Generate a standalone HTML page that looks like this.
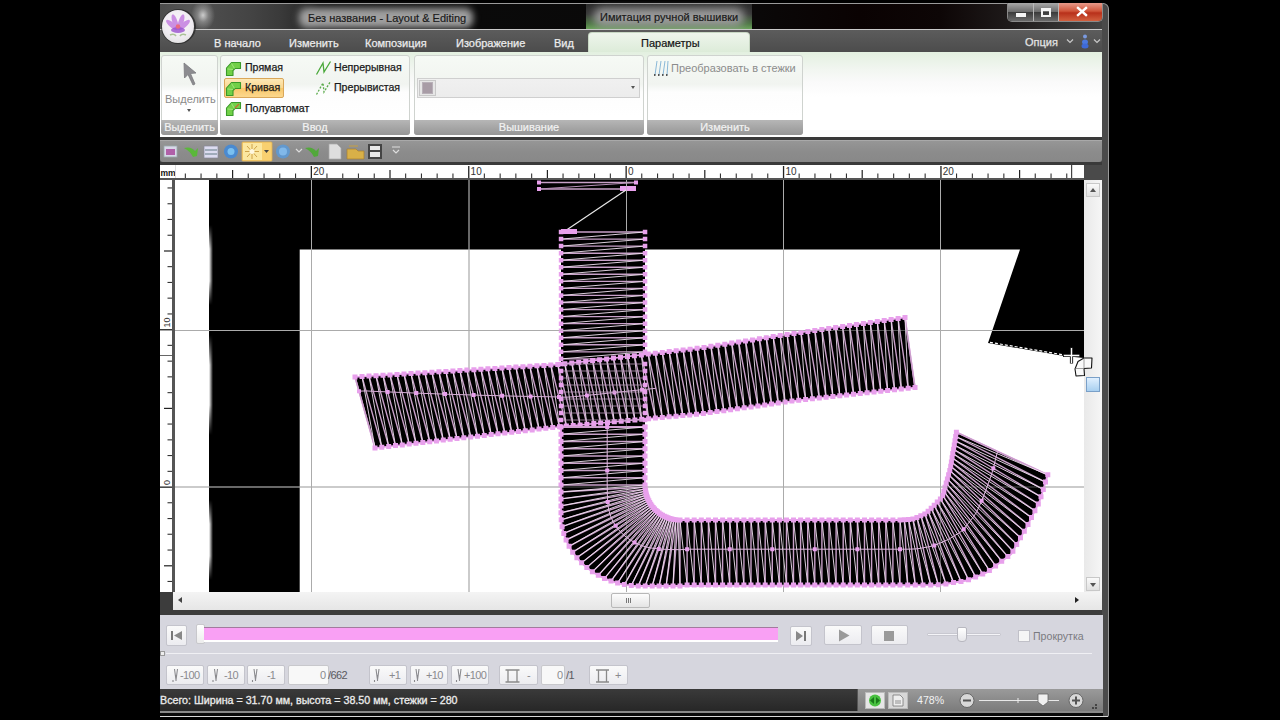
<!DOCTYPE html>
<html><head><meta charset="utf-8">
<style>
*{margin:0;padding:0;box-sizing:border-box}
html,body{width:1280px;height:720px;overflow:hidden;background:#000;font-family:"Liberation Sans",sans-serif;font-size:11px}
.a{position:absolute}
.t{position:absolute;white-space:nowrap;line-height:1}
#frame{left:160px;top:3px;width:949px;height:714px;background:#4a4a4a;border:1px solid #9a9a9a;border-left:none;border-radius:0 6px 2px 0}
#title{left:160px;top:4px;width:942px;height:25px;background:linear-gradient(90deg,#4c4c4c 0,#555 30px,#4a4a4a 60px,#444 90px,#3a3a3a 120px,#2e2e2e 140px,#161616 160px,#0a0a0a 300px,#0a0808 600px,#0a0202 700px,#0d0606 780px,#1e1a1a 850px,#3a3a3a 920px,#444 942px)}
#tline{left:160px;top:29px;width:942px;height:1px;background:#c9c9c9}
#tabs{left:160px;top:30px;width:942px;height:22px;background:linear-gradient(#5c5c5c,#4c4c4c)}
#ribbon{left:160px;top:52px;width:942px;height:86px;background:linear-gradient(#e3f0e0 0,#f2f6f1 18px,#fafafa 30px,#fff 45px,#fff)}
.grp{position:absolute;top:3px;height:80px;border:1px solid #cfd3cf;border-radius:3px;background:linear-gradient(#f6faf5 0,#f1f4f0 28px,#fdfdfd 36px,#fff 60px)}
.glab{position:absolute;left:-1px;right:-1px;bottom:-1px;height:15px;border-radius:0 0 3px 3px;background:linear-gradient(#b6b6b6,#969696);color:#f2f2f2;font-size:11px;text-align:center;line-height:15px;-webkit-text-stroke:.2px #f2f2f2}
#tbsep{left:160px;top:137px;width:942px;height:3px;background:#3a3a3a}
#toolbar{left:160px;top:140px;width:942px;height:22px;background:linear-gradient(#969696 0,#8c8c8c 50%,#888 100%);border-top:1px solid #a9a9a9;border-radius:0 0 3px 3px}
#tbsep2{left:160px;top:162px;width:942px;height:3px;background:#3a3a3a}
#rulerT{left:160px;top:165px;width:924px;height:13px;background:#fff}
#rulerTb{left:160px;top:178px;width:924px;height:2px;background:#555}
#rulerL{left:160px;top:180px;width:12px;height:412px;background:#fff}
#rulerLb{left:172px;top:178px;width:3px;height:414px;background:#555}
#corner{left:1084px;top:165px;width:18px;height:15px;background:#4a4a4a}
#vscroll{left:1084px;top:180px;width:18px;height:413px;background:linear-gradient(90deg,#e9e9e9,#f6f6f6)}
#hscroll{left:173px;top:592px;width:929px;height:18px;background:linear-gradient(#f4f4f4,#e6e6e6)}
#hsl{left:160px;top:592px;width:13px;height:18px;background:#3c3c3c}
#band{left:160px;top:610px;width:942px;height:5px;background:#3c3c3c}
#player{left:160px;top:615px;width:943px;height:74px;background:#d6d6de}
#status{left:160px;top:689px;width:943px;height:23px;background:linear-gradient(#3a3a3a,#262626)}
#statusR{left:857px;top:689px;width:246px;height:23px;background:linear-gradient(#9a9a9a,#7a7a7a);border-left:1px solid #555}
.btn{position:absolute;border:1px solid #c4c4cc;border-radius:2px;background:linear-gradient(#fafafa,#ececf0)}
</style></head><body>
<div id="frame" class="a"></div>
<div id="title" class="a"></div>
<div class="a" style="left:299px;top:8px;width:174px;height:20px;border-radius:8px;background:#a0a0a0;filter:blur(3.5px)"></div>
<div class="t" style="left:308px;top:13px;color:#1a1a1a;font-size:11px;-webkit-text-stroke:.2px #1a1a1a">Без названия - Layout &amp; Editing</div>
<div class="a" style="left:586px;top:4px;width:166px;height:25px;background:linear-gradient(#2a2a2a 0,#3a3a3a 40%,#4f7a45 80%,#6aa35a 100%)"></div>
<div class="a" style="left:594px;top:8px;width:150px;height:19px;border-radius:8px;background:#9a9a9a;filter:blur(4px)"></div>
<div class="t" style="left:600px;top:12px;color:#1a1a1a;font-size:11px;-webkit-text-stroke:.2px #1a1a1a">Имитация ручной вышивки</div>
<!-- window buttons -->
<div class="a" style="left:1007px;top:3px;width:96px;height:19px;border:1px solid #8a8a8a;border-top:none;border-radius:0 0 5px 5px;overflow:hidden">
 <div class="a" style="left:0;top:0;width:26px;height:18px;background:linear-gradient(#a8a8a8,#6a6a6a 50%,#3a3a3a 51%,#6a6a6a);border-right:1px solid #b8b8b8"></div>
 <div class="a" style="left:26px;top:0;width:25px;height:18px;background:linear-gradient(#a8a8a8,#6a6a6a 50%,#3a3a3a 51%,#6a6a6a);border-right:1px solid #b8b8b8"></div>
 <div class="a" style="left:51px;top:0;width:45px;height:18px;background:linear-gradient(#e89a8a,#d0553a 45%,#b8301a 55%,#d2603f)"></div>
 <div class="a" style="left:8px;top:10px;width:10px;height:4px;background:#f4f4f4"></div>
 <div class="a" style="left:33px;top:5px;width:10px;height:9px;border:2px solid #f4f4f4;border-top-width:3px"></div>
 <svg class="a" style="left:51px;top:0" width="45" height="18"><path d="M19 5 L27 12 M27 5 L19 12" stroke="#fff" stroke-width="2.4" stroke-linecap="square"/></svg>
</div>
<div id="tline" class="a"></div>
<div id="tabs" class="a"></div>
<div class="t" style="left:214px;top:38px;color:#ececec;-webkit-text-stroke:.25px #ececec">В начало</div>
<div class="t" style="left:289px;top:38px;color:#ececec;-webkit-text-stroke:.25px #ececec">Изменить</div>
<div class="t" style="left:365px;top:38px;color:#ececec;-webkit-text-stroke:.25px #ececec">Композиция</div>
<div class="t" style="left:456px;top:38px;color:#ececec;-webkit-text-stroke:.25px #ececec">Изображение</div>
<div class="t" style="left:554px;top:38px;color:#ececec;-webkit-text-stroke:.25px #ececec">Вид</div>
<div class="a" style="left:588px;top:32px;width:162px;height:21px;border-radius:4px 4px 0 0;background:linear-gradient(#eef5ec,#dcebd8);border:1px solid #c8d8c4;border-bottom:none"></div>
<div class="t" style="left:641px;top:38px;color:#141414;-webkit-text-stroke:.2px #141414">Параметры</div>
<div class="t" style="left:1025px;top:37px;color:#e4e4e4;font-size:11px;-webkit-text-stroke:.25px #e4e4e4">Опция</div>
<svg class="a" style="left:1066px;top:38px" width="8" height="6"><path d="M1 1.5 L4 4.5 L7 1.5" stroke="#c8c8c8" stroke-width="1.2" fill="none"/></svg>
<svg class="a" style="left:1078px;top:32px;filter:blur(.4px)" width="14" height="18"><circle cx="7" cy="4.5" r="2" fill="#7a9ae0"/><ellipse cx="7" cy="10" rx="3" ry="2.5" fill="#4a78e0"/><ellipse cx="7" cy="14" rx="3.5" ry="2.5" fill="#3e6ad8"/></svg>
<svg class="a" style="left:1093px;top:38px" width="8" height="6"><path d="M1 1.5 L4 4.5 L7 1.5" stroke="#c8c8c8" stroke-width="1.2" fill="none"/></svg>
<!-- logo -->
<div class="a" style="left:188px;top:4px;width:30px;height:25px;background:radial-gradient(ellipse 40% 60% at 50% 45%,rgba(235,235,235,.8) 0,rgba(190,190,190,.45) 45%,rgba(90,90,90,0) 100%)"></div>
<div class="a" style="left:161px;top:9px;width:35px;height:35px;border-radius:50%;background:rgba(40,40,40,.75);filter:blur(.6px)"></div>
<div class="a" style="left:162px;top:10px;width:32px;height:33px;border-radius:50%;background:radial-gradient(circle at 50% 40%,#faf6fa 0,#f0ecf2 55%,#e2e2e2 80%,#c8c8c8 100%)"></div>
<svg class="a" style="left:162px;top:10px;filter:blur(.5px)" width="32" height="33"><g fill="#c47ee0" opacity=".85"><ellipse cx="10" cy="15" rx="2.6" ry="7.5" transform="rotate(-50 10 15)"/><ellipse cx="22" cy="15" rx="2.6" ry="7.5" transform="rotate(50 22 15)"/><ellipse cx="13" cy="12" rx="2.6" ry="8" transform="rotate(-18 13 12)"/><ellipse cx="19" cy="12" rx="2.6" ry="8" transform="rotate(18 19 12)"/></g><ellipse cx="16" cy="20" rx="7" ry="3" fill="#9a50d0" opacity=".8"/><circle cx="16" cy="16.5" r="2.3" fill="#e86a80"/><path d="M8 25 Q12 23 14 26 M24 25 Q20 23 18 26" stroke="#98b880" stroke-width="1.6" fill="none" opacity=".8"/></svg>
<div id="ribbon" class="a">
 <div class="grp" style="left:1px;width:57px;top:3px;height:80px"><div class="glab">Выделить</div></div>
 <div class="grp" style="left:60px;width:190px"><div class="glab">Ввод</div></div>
 <div class="grp" style="left:254px;width:230px"><div class="glab">Вышивание</div></div>
 <div class="grp" style="left:487px;width:156px"><div class="glab">Изменить</div></div>
</div>
<!-- select arrow -->
<svg class="a" style="left:178px;top:60px" width="24" height="30"><path d="M6 3 L6.5 18 L10 14.5 L15 25 L17 24 L12.5 13.5 L18 13 Z" fill="#8c8c90" stroke="#7a7a7e" stroke-width=".8" stroke-linejoin="round"/></svg>
<div class="t" style="left:165px;top:94px;color:#8a8a8a;font-size:11px">Выделить</div>
<div class="a" style="left:187px;top:109px;width:0;height:0;border-left:2.5px solid transparent;border-right:2.5px solid transparent;border-top:3px solid #555"></div>
<!-- Ввод items -->
<div class="a" style="left:224px;top:78px;width:60px;height:20px;border:1px solid #d9a75a;border-radius:2px;background:linear-gradient(#fde9b6,#fbd58e 50%,#f9c76a 51%,#fcd88e)"></div>
<svg class="a" style="left:225px;top:60px" width="18" height="18"><path d="M1.5 15.5 L1.5 8 L6.5 2.5 L15.5 2.5 L15.5 8.5 L10 8.5 L8 10.5 L8 15.5 Z" fill="#72d048" stroke="#3a9a2a" stroke-width="1.1" stroke-linejoin="round"/><path d="M2.5 9 L8 9.5 M6.5 3.5 L9.5 8.5" stroke="#a8e888" stroke-width=".8"/></svg>
<svg class="a" style="left:225px;top:80px" width="18" height="18"><path d="M1.5 15.5 L1.5 8 L6.5 2.5 L15.5 2.5 L15.5 8.5 L10 8.5 L8 10.5 L8 15.5 Z" fill="#72d048" stroke="#3a9a2a" stroke-width="1.1" stroke-linejoin="round"/><path d="M2.5 9 L8 9.5 M6.5 3.5 L9.5 8.5" stroke="#a8e888" stroke-width=".8"/></svg>
<svg class="a" style="left:225px;top:100px" width="18" height="18"><path d="M1.5 15.5 L1.5 8 L6.5 2.5 L15.5 2.5 L15.5 8.5 L10 8.5 L8 10.5 L8 15.5 Z" fill="#72d048" stroke="#3a9a2a" stroke-width="1.1" stroke-linejoin="round"/><path d="M2.5 9 L8 9.5 M6.5 3.5 L9.5 8.5" stroke="#a8e888" stroke-width=".8"/><path d="M10 8 L14 4" stroke="#c86a30" stroke-width="1.2"/></svg>
<div class="t" style="left:245px;top:62px;color:#1a1a1a;font-size:10.6px;-webkit-text-stroke:.25px #1a1a1a">Прямая</div>
<div class="t" style="left:245px;top:82px;color:#1a1a1a;font-size:10.6px;-webkit-text-stroke:.25px #1a1a1a">Кривая</div>
<div class="t" style="left:245px;top:103px;color:#1a1a1a;font-size:10.6px;-webkit-text-stroke:.25px #1a1a1a">Полуавтомат</div>
<svg class="a" style="left:315px;top:60px" width="18" height="16"><path d="M1.5 14.5 L8 3 L9 12 L15.5 1.5" fill="none" stroke="#4aa83a" stroke-width="1.3"/></svg>
<svg class="a" style="left:315px;top:80px" width="18" height="16"><path d="M1.5 14.5 L8 3 L9 12 L15.5 1.5" fill="none" stroke="#5aaa4a" stroke-width="1.3" stroke-dasharray="2 1.5"/></svg>
<div class="t" style="left:334px;top:62px;color:#1a1a1a;font-size:10.6px;-webkit-text-stroke:.25px #1a1a1a">Непрерывная</div>
<div class="t" style="left:334px;top:82px;color:#1a1a1a;font-size:10.6px;-webkit-text-stroke:.25px #1a1a1a">Прерывистая</div>
<!-- Вышивание combo -->
<div class="a" style="left:417px;top:78px;width:223px;height:20px;border:1px solid #cfcfcf;background:linear-gradient(#f0f0f0,#ececec)"></div>
<div class="a" style="left:419px;top:80px;width:17px;height:16px;border:1px solid #c8c8c8;background:#e6e6e6"></div>
<div class="a" style="left:422px;top:82px;width:11px;height:12px;background:#a89ca6;border:1px solid #b8b0b8"></div>
<div class="a" style="left:631px;top:86px;width:0;height:0;border-left:2.5px solid transparent;border-right:2.5px solid transparent;border-top:3px solid #555"></div>
<!-- Изменить -->
<svg class="a" style="left:653px;top:59px" width="16" height="18"><g stroke="#8ab8d8" stroke-width="1"><path d="M2 16 L4 2 M6 16 L8 2 M10 16 L12 2 M14 16 L15 2"/></g><g fill="#555"><rect x="1" y="15" width="1.5" height="2"/><rect x="5" y="15" width="1.5" height="2"/><rect x="9" y="15" width="1.5" height="2"/><rect x="13" y="15" width="1.5" height="2"/></g></svg>
<div class="t" style="left:671px;top:63px;color:#8c8c8c;font-size:11px">Преобразовать в стежки</div>
<div id="tbsep" class="a"></div>
<div id="toolbar" class="a"></div>
<svg class="a" style="left:160px;top:140px;filter:blur(.5px)" width="260" height="22">
 <rect x="4" y="6" width="13" height="11" fill="#d8d8e8" stroke="#9aa" stroke-width=".8"/><rect x="6" y="9" width="9" height="6" fill="#b060a8"/>
 <path d="M24 8 Q31 6 35 11 L38 8 L37 16 L33 17 Q30 11 24 8Z" fill="#5ab83a"/>
 <rect x="44" y="6" width="14" height="12" fill="#dcdcf0" stroke="#889" stroke-width=".7"/><path d="M45 10 H57 M45 14 H57" stroke="#8a9aa8" stroke-width="1.5"/>
 <circle cx="71" cy="11.5" r="7" fill="#4a8ad0"/><circle cx="71" cy="11.5" r="3.5" fill="#7ac0f0"/>
 <rect x="82" y="2" width="30" height="19" rx="1" fill="#f8d070" stroke="#e0b050" stroke-width=".8"/><rect x="83" y="3" width="19" height="17" fill="#fbe7a0"/>
 <g stroke="#c89a40" stroke-width=".9"><path d="M92 4 V19 M85 11.5 H99 M87 6 L97 17 M97 6 L87 17"/></g><circle cx="92" cy="11.5" r="2.5" fill="#fff8e0"/>
 <path d="M104 10 L109 10 L106.5 13Z" fill="#444"/>
 <circle cx="123" cy="11.5" r="7" fill="#5a9ad8" opacity=".85"/><circle cx="123" cy="11.5" r="4" fill="#8ac0f0" opacity=".8"/>
 <path d="M136 9 L139 12 L142 9" stroke="#ddd" stroke-width="1.2" fill="none"/>
 <path d="M145 8 Q152 6 156 11 L159 8 L158 16 L154 17 Q151 11 145 8Z" fill="#52a83a"/>
 <path d="M169 4 H177 L181 8 V19 H169Z" fill="#dedede" stroke="#aaa" stroke-width=".7"/>
 <path d="M187 9 H196 L198 11 H204 V19 H187Z" fill="#d8b048" stroke="#a88030" stroke-width=".7"/><path d="M189 6 H198" stroke="#c8a040" stroke-width="1"/>
 <rect x="208" y="4" width="14" height="15" fill="#444" /><rect x="210" y="6" width="10" height="4" fill="#e8e8e8"/><rect x="210" y="12" width="10" height="5" fill="#e8e8e8"/>
 <path d="M232 7 H240 M233 10 L236 13 L239 10" stroke="#ddd" stroke-width="1.2" fill="none"/>
</svg>
<div id="tbsep2" class="a"></div>
<div id="rulerT" class="a"></div><div id="rulerTb" class="a"></div>
<div id="rulerL" class="a"></div><div id="rulerLb" class="a"></div>
<svg class="a" style="left:160px;top:165px" width="924" height="15" viewBox="160 165 924 15"><text x="160.5" y="175.5" font-size="8.5" font-weight="bold" fill="#111" font-family="Liberation Sans">mm</text><rect x="175" y="165" width="1" height="13" fill="#ddd"/><rect x="184.8" y="173.5" width="1.1" height="4.5" fill="#333"/><rect x="200.5" y="173.5" width="1.1" height="4.5" fill="#333"/><rect x="216.3" y="173.5" width="1.1" height="4.5" fill="#333"/><rect x="232" y="170" width="1.2" height="8" fill="#222"/><rect x="247.7" y="173.5" width="1.1" height="4.5" fill="#333"/><rect x="263.5" y="173.5" width="1.1" height="4.5" fill="#333"/><rect x="279.2" y="173.5" width="1.1" height="4.5" fill="#333"/><rect x="295" y="173.5" width="1.1" height="4.5" fill="#333"/><rect x="310.7" y="166" width="1.3" height="12" fill="#222"/><text x="313.2" y="174.5" font-size="10" fill="#333" font-family="Liberation Sans">20</text><rect x="326.4" y="173.5" width="1.1" height="4.5" fill="#333"/><rect x="342.2" y="173.5" width="1.1" height="4.5" fill="#333"/><rect x="357.9" y="173.5" width="1.1" height="4.5" fill="#333"/><rect x="373.7" y="173.5" width="1.1" height="4.5" fill="#333"/><rect x="389.4" y="170" width="1.2" height="8" fill="#222"/><rect x="405.1" y="173.5" width="1.1" height="4.5" fill="#333"/><rect x="420.9" y="173.5" width="1.1" height="4.5" fill="#333"/><rect x="436.6" y="173.5" width="1.1" height="4.5" fill="#333"/><rect x="452.4" y="173.5" width="1.1" height="4.5" fill="#333"/><rect x="468.1" y="166" width="1.3" height="12" fill="#222"/><text x="470.6" y="174.5" font-size="10" fill="#333" font-family="Liberation Sans">10</text><rect x="483.8" y="173.5" width="1.1" height="4.5" fill="#333"/><rect x="499.6" y="173.5" width="1.1" height="4.5" fill="#333"/><rect x="515.3" y="173.5" width="1.1" height="4.5" fill="#333"/><rect x="531.1" y="173.5" width="1.1" height="4.5" fill="#333"/><rect x="546.8" y="170" width="1.2" height="8" fill="#222"/><rect x="562.5" y="173.5" width="1.1" height="4.5" fill="#333"/><rect x="578.3" y="173.5" width="1.1" height="4.5" fill="#333"/><rect x="594" y="173.5" width="1.1" height="4.5" fill="#333"/><rect x="609.8" y="173.5" width="1.1" height="4.5" fill="#333"/><rect x="625.5" y="166" width="1.3" height="12" fill="#222"/><text x="628" y="174.5" font-size="10" fill="#333" font-family="Liberation Sans">0</text><rect x="641.2" y="173.5" width="1.1" height="4.5" fill="#333"/><rect x="657" y="173.5" width="1.1" height="4.5" fill="#333"/><rect x="672.7" y="173.5" width="1.1" height="4.5" fill="#333"/><rect x="688.5" y="173.5" width="1.1" height="4.5" fill="#333"/><rect x="704.2" y="170" width="1.2" height="8" fill="#222"/><rect x="719.9" y="173.5" width="1.1" height="4.5" fill="#333"/><rect x="735.7" y="173.5" width="1.1" height="4.5" fill="#333"/><rect x="751.4" y="173.5" width="1.1" height="4.5" fill="#333"/><rect x="767.2" y="173.5" width="1.1" height="4.5" fill="#333"/><rect x="782.9" y="166" width="1.3" height="12" fill="#222"/><text x="785.4" y="174.5" font-size="10" fill="#333" font-family="Liberation Sans">10</text><rect x="798.6" y="173.5" width="1.1" height="4.5" fill="#333"/><rect x="814.4" y="173.5" width="1.1" height="4.5" fill="#333"/><rect x="830.1" y="173.5" width="1.1" height="4.5" fill="#333"/><rect x="845.9" y="173.5" width="1.1" height="4.5" fill="#333"/><rect x="861.6" y="170" width="1.2" height="8" fill="#222"/><rect x="877.3" y="173.5" width="1.1" height="4.5" fill="#333"/><rect x="893.1" y="173.5" width="1.1" height="4.5" fill="#333"/><rect x="908.8" y="173.5" width="1.1" height="4.5" fill="#333"/><rect x="924.6" y="173.5" width="1.1" height="4.5" fill="#333"/><rect x="940.3" y="166" width="1.3" height="12" fill="#222"/><text x="942.8" y="174.5" font-size="10" fill="#333" font-family="Liberation Sans">20</text><rect x="956" y="173.5" width="1.1" height="4.5" fill="#333"/><rect x="971.8" y="173.5" width="1.1" height="4.5" fill="#333"/><rect x="987.5" y="173.5" width="1.1" height="4.5" fill="#333"/><rect x="1003.3" y="173.5" width="1.1" height="4.5" fill="#333"/><rect x="1019" y="170" width="1.2" height="8" fill="#222"/><rect x="1034.7" y="173.5" width="1.1" height="4.5" fill="#333"/><rect x="1050.5" y="173.5" width="1.1" height="4.5" fill="#333"/><rect x="1066.2" y="173.5" width="1.1" height="4.5" fill="#333"/><rect x="1071" y="165" width="1.2" height="13" fill="#444"/></svg>
<svg class="a" style="left:160px;top:180px" width="12" height="412" viewBox="160 180 12 412"><rect x="160" y="355" width="12" height="1" fill="#666"/><rect x="167.5" y="187.4" width="4.5" height="1.1" fill="#333"/><rect x="167.5" y="203.2" width="4.5" height="1.1" fill="#333"/><rect x="167.5" y="218.9" width="4.5" height="1.1" fill="#333"/><rect x="167.5" y="234.7" width="4.5" height="1.1" fill="#333"/><rect x="164" y="250.4" width="8" height="1.2" fill="#222"/><rect x="167.5" y="266.1" width="4.5" height="1.1" fill="#333"/><rect x="167.5" y="281.9" width="4.5" height="1.1" fill="#333"/><rect x="167.5" y="297.6" width="4.5" height="1.1" fill="#333"/><rect x="167.5" y="313.4" width="4.5" height="1.1" fill="#333"/><rect x="160" y="329.1" width="12" height="1.3" fill="#222"/><text transform="translate(169.5 327.6) rotate(-90)" font-size="9" fill="#333" font-family="Liberation Sans">10</text><rect x="167.5" y="344.8" width="4.5" height="1.1" fill="#333"/><rect x="167.5" y="360.6" width="4.5" height="1.1" fill="#333"/><rect x="167.5" y="376.3" width="4.5" height="1.1" fill="#333"/><rect x="167.5" y="392.1" width="4.5" height="1.1" fill="#333"/><rect x="164" y="407.8" width="8" height="1.2" fill="#222"/><rect x="167.5" y="423.5" width="4.5" height="1.1" fill="#333"/><rect x="167.5" y="439.3" width="4.5" height="1.1" fill="#333"/><rect x="167.5" y="455" width="4.5" height="1.1" fill="#333"/><rect x="167.5" y="470.8" width="4.5" height="1.1" fill="#333"/><rect x="160" y="486.5" width="12" height="1.3" fill="#222"/><text transform="translate(169.5 485) rotate(-90)" font-size="9" fill="#333" font-family="Liberation Sans">0</text><rect x="167.5" y="502.2" width="4.5" height="1.1" fill="#333"/><rect x="167.5" y="518" width="4.5" height="1.1" fill="#333"/><rect x="167.5" y="533.7" width="4.5" height="1.1" fill="#333"/><rect x="167.5" y="549.5" width="4.5" height="1.1" fill="#333"/><rect x="164" y="565.2" width="8" height="1.2" fill="#222"/><rect x="167.5" y="580.9" width="4.5" height="1.1" fill="#333"/></svg>
<svg class="a" style="left:175px;top:180px" width="909" height="412" viewBox="175 180 909 412">
<rect x="175" y="180" width="909" height="412" fill="#fff"/>
<path d="M209 180 H1084 V358 L1064 356 L988 343 L1020 249.5 H299.7 V592 H209Z" fill="#000"/>
<defs><linearGradient id="se" x1="0" x2="1"><stop offset="0" stop-color="#fff"/><stop offset="1" stop-color="#fff" stop-opacity="0"/></linearGradient><linearGradient id="sv" x1="0" x2="0" y1="0" y2="1"><stop offset="0" stop-color="#000"/><stop offset=".3" stop-color="#fff"/><stop offset=".7" stop-color="#fff"/><stop offset="1" stop-color="#000"/></linearGradient><mask id="sm"><rect x="205" y="225" width="12" height="80" fill="url(#sv)"/><rect x="205" y="335" width="12" height="100" fill="url(#sv)"/><rect x="205" y="500" width="12" height="80" fill="url(#sv)"/></mask></defs>
<g mask="url(#sm)"><rect x="209" y="225" width="4" height="80" fill="url(#se)"/><rect x="209" y="335" width="4" height="100" fill="url(#se)"/><rect x="209" y="500" width="4" height="80" fill="url(#se)"/></g>
<path d="M311.5 180V592M469 180V592M626.5 180V592M783.5 180V592M940.5 180V592M175 330.5H1084M175 487H1084" stroke="#a8a8a8" stroke-width="1" fill="none"/>
<path d="M539 182.5H636M539 189H636" stroke="#c8a0c8" stroke-width="1.5"/>
<path d="M636 182.5L539 189" stroke="#b890b8" stroke-width="1"/>
<path d="M537 180.5h4v4h-4zM634 180.5h4v4h-4zM537 187h4v4h-4zM630 187h4v4h-4z" fill="#e8a0ec"/>
<rect x="620" y="186" width="16" height="5" fill="#e8a0ec"/>
<path d="M626 190L565 231" stroke="#e8e8e8" stroke-width="1.2"/>
<rect x="561" y="231" width="84" height="200" fill="#000"/>
<path d="M561 232L645 232M561 239.1L645 239.1M561 246.1L645 246.1M561 253.2L645 253.2M561 260.2L645 260.2M561 267.2L645 267.2M561 274.3L645 274.3M561 281.4L645 281.4M561 288.4L645 288.4M561 295.4L645 295.4M561 302.5L645 302.5M561 309.6L645 309.6M561 316.6L645 316.6M561 323.6L645 323.6M561 330.7L645 330.7M561 337.8L645 337.8M561 344.8L645 344.8M561 351.9L645 351.9M561 358.9L645 358.9M561 365.9L645 365.9" stroke="#c8a0c8" stroke-width="1.4" fill="none"/>
<path d="M645 232L561 239.1M645 239.1L561 246.1M645 246.1L561 253.2M645 253.2L561 260.2M645 260.2L561 267.2M645 267.2L561 274.3M645 274.3L561 281.4M645 281.4L561 288.4M645 288.4L561 295.4M645 295.4L561 302.5M645 302.5L561 309.6M645 309.6L561 316.6M645 316.6L561 323.6M645 323.6L561 330.7M645 330.7L561 337.8M645 337.8L561 344.8M645 344.8L561 351.9M645 351.9L561 358.9M645 358.9L561 365.9" stroke="#f4e4f4" stroke-width="0.9" fill="none"/>
<path d="M558.8 229.8h4.5v4.5h-4.5zM558.8 236.8h4.5v4.5h-4.5zM558.8 243.8h4.5v4.5h-4.5zM558.8 250.9h4.5v4.5h-4.5zM558.8 257.9h4.5v4.5h-4.5zM558.8 265h4.5v4.5h-4.5zM558.8 272.1h4.5v4.5h-4.5zM558.8 279.1h4.5v4.5h-4.5zM558.8 286.1h4.5v4.5h-4.5zM558.8 293.2h4.5v4.5h-4.5zM558.8 300.2h4.5v4.5h-4.5zM558.8 307.3h4.5v4.5h-4.5zM558.8 314.4h4.5v4.5h-4.5zM558.8 321.4h4.5v4.5h-4.5zM558.8 328.4h4.5v4.5h-4.5zM558.8 335.5h4.5v4.5h-4.5zM558.8 342.6h4.5v4.5h-4.5zM558.8 349.6h4.5v4.5h-4.5zM558.8 356.6h4.5v4.5h-4.5zM558.8 363.7h4.5v4.5h-4.5z" fill="#e8a0ec"/>
<path d="M642.8 229.8h4.5v4.5h-4.5zM642.8 236.8h4.5v4.5h-4.5zM642.8 243.8h4.5v4.5h-4.5zM642.8 250.9h4.5v4.5h-4.5zM642.8 257.9h4.5v4.5h-4.5zM642.8 265h4.5v4.5h-4.5zM642.8 272.1h4.5v4.5h-4.5zM642.8 279.1h4.5v4.5h-4.5zM642.8 286.1h4.5v4.5h-4.5zM642.8 293.2h4.5v4.5h-4.5zM642.8 300.2h4.5v4.5h-4.5zM642.8 307.3h4.5v4.5h-4.5zM642.8 314.4h4.5v4.5h-4.5zM642.8 321.4h4.5v4.5h-4.5zM642.8 328.4h4.5v4.5h-4.5zM642.8 335.5h4.5v4.5h-4.5zM642.8 342.6h4.5v4.5h-4.5zM642.8 349.6h4.5v4.5h-4.5zM642.8 356.6h4.5v4.5h-4.5zM642.8 363.7h4.5v4.5h-4.5z" fill="#e8a0ec"/>
<rect x="561" y="229" width="16" height="5" fill="#e8a0ec"/>
<path d="M355 377L560 364.4L700 348L800 332.5L905 317.5L915 387.5L800 400L700 414L560 426.7L375 448Z" fill="#000" stroke="#e8a0ec" stroke-width="1.6" stroke-linejoin="round"/>
<path d="M355 377L375 448M362 376.6L381.8 447.2M369 376.1L388.7 446.4M376 375.7L395.5 445.6M383 375.3L402.3 444.9M390 374.9L409.2 444.1M397 374.4L416 443.3M404 374L422.8 442.5M411 373.6L429.7 441.7M418 373.1L436.5 440.9M424.9 372.7L443.3 440.1M431.9 372.3L450.2 439.3M438.9 371.8L457 438.6M445.9 371.4L463.8 437.8M452.9 371L470.7 437M459.9 370.6L477.5 436.2M466.9 370.1L484.3 435.4M473.9 369.7L491.2 434.6M480.9 369.3L498 433.8M487.9 368.8L504.8 433.1M494.9 368.4L511.7 432.3M501.9 368L518.5 431.5M508.9 367.5L525.3 430.7M515.9 367.1L532.2 429.9M522.9 366.7L539 429.1M529.9 366.3L545.8 428.3M536.9 365.8L552.7 427.5M543.9 365.4L559.5 426.8M550.8 365L566.4 426.1M557.8 364.5L573.2 425.5M564.8 363.8L580.1 424.9M571.8 363L586.9 424.3M578.7 362.2L593.8 423.6M585.7 361.4L600.6 423M592.6 360.6L607.5 422.4M599.6 359.8L614.3 421.8M606.6 358.9L621.2 421.2M613.5 358.1L628 420.5M620.5 357.3L634.9 419.9M627.5 356.5L641.7 419.3M634.4 355.7L648.6 418.7M641.4 354.9L655.4 418M648.3 354.1L662.3 417.4M655.3 353.2L669.1 416.8M662.3 352.4L676 416.2M669.2 351.6L682.8 415.6M676.2 350.8L689.7 414.9M683.1 350L696.5 414.3M690.1 349.2L703.4 413.5M697.1 348.3L710.2 412.6M704 347.4L717 411.6M710.9 346.3L723.8 410.7M717.8 345.2L730.6 409.7M724.8 344.2L737.4 408.8M731.7 343.1L744.2 407.8M738.6 342L751.1 406.9M745.5 340.9L757.9 405.9M752.5 339.9L764.7 404.9M759.4 338.8L771.5 404M766.3 337.7L778.3 403M773.2 336.6L785.1 402.1M780.2 335.6L791.9 401.1M787.1 334.5L798.7 400.2M794 333.4L805.6 399.4M800.9 332.4L812.4 398.7M807.9 331.4L819.3 397.9M814.8 330.4L826.1 397.2M821.8 329.4L832.9 396.4M828.7 328.4L839.8 395.7M835.6 327.4L846.6 394.9M842.6 326.4L853.5 394.2M849.5 325.4L860.3 393.4M856.4 324.4L867.1 392.7M863.4 323.4L874 392M870.3 322.5L880.8 391.2M877.3 321.5L887.6 390.5M884.2 320.5L894.5 389.7M891.1 319.5L901.3 389M898.1 318.5L908.2 388.2M905 317.5L915 387.5" stroke="#c8a0c8" stroke-width="1.4" fill="none"/>
<path d="M375 448L362 376.6M381.8 447.2L369 376.1M388.7 446.4L376 375.7M395.5 445.6L383 375.3M402.3 444.9L390 374.9M409.2 444.1L397 374.4M416 443.3L404 374M422.8 442.5L411 373.6M429.7 441.7L418 373.1M436.5 440.9L424.9 372.7M443.3 440.1L431.9 372.3M450.2 439.3L438.9 371.8M457 438.6L445.9 371.4M463.8 437.8L452.9 371M470.7 437L459.9 370.6M477.5 436.2L466.9 370.1M484.3 435.4L473.9 369.7M491.2 434.6L480.9 369.3M498 433.8L487.9 368.8M504.8 433.1L494.9 368.4M511.7 432.3L501.9 368M518.5 431.5L508.9 367.5M525.3 430.7L515.9 367.1M532.2 429.9L522.9 366.7M539 429.1L529.9 366.3M545.8 428.3L536.9 365.8M552.7 427.5L543.9 365.4M559.5 426.8L550.8 365M566.4 426.1L557.8 364.5M573.2 425.5L564.8 363.8M580.1 424.9L571.8 363M586.9 424.3L578.7 362.2M593.8 423.6L585.7 361.4M600.6 423L592.6 360.6M607.5 422.4L599.6 359.8M614.3 421.8L606.6 358.9M621.2 421.2L613.5 358.1M628 420.5L620.5 357.3M634.9 419.9L627.5 356.5M641.7 419.3L634.4 355.7M648.6 418.7L641.4 354.9M655.4 418L648.3 354.1M662.3 417.4L655.3 353.2M669.1 416.8L662.3 352.4M676 416.2L669.2 351.6M682.8 415.6L676.2 350.8M689.7 414.9L683.1 350M696.5 414.3L690.1 349.2M703.4 413.5L697.1 348.3M710.2 412.6L704 347.4M717 411.6L710.9 346.3M723.8 410.7L717.8 345.2M730.6 409.7L724.8 344.2M737.4 408.8L731.7 343.1M744.2 407.8L738.6 342M751.1 406.9L745.5 340.9M757.9 405.9L752.5 339.9M764.7 404.9L759.4 338.8M771.5 404L766.3 337.7M778.3 403L773.2 336.6M785.1 402.1L780.2 335.6M791.9 401.1L787.1 334.5M798.7 400.2L794 333.4M805.6 399.4L800.9 332.4M812.4 398.7L807.9 331.4M819.3 397.9L814.8 330.4M826.1 397.2L821.8 329.4M832.9 396.4L828.7 328.4M839.8 395.7L835.6 327.4M846.6 394.9L842.6 326.4M853.5 394.2L849.5 325.4M860.3 393.4L856.4 324.4M867.1 392.7L863.4 323.4M874 392L870.3 322.5M880.8 391.2L877.3 321.5M887.6 390.5L884.2 320.5M894.5 389.7L891.1 319.5M901.3 389L898.1 318.5M908.2 388.2L905 317.5" stroke="#f4e4f4" stroke-width="0.9" fill="none"/>
<path d="M352.5 374.5h5v5h-5zM359.5 374.1h5v5h-5zM366.5 373.6h5v5h-5zM373.5 373.2h5v5h-5zM380.5 372.8h5v5h-5zM387.5 372.4h5v5h-5zM394.5 371.9h5v5h-5zM401.5 371.5h5v5h-5zM408.5 371.1h5v5h-5zM415.5 370.6h5v5h-5zM422.4 370.2h5v5h-5zM429.4 369.8h5v5h-5zM436.4 369.3h5v5h-5zM443.4 368.9h5v5h-5zM450.4 368.5h5v5h-5zM457.4 368.1h5v5h-5zM464.4 367.6h5v5h-5zM471.4 367.2h5v5h-5zM478.4 366.8h5v5h-5zM485.4 366.3h5v5h-5zM492.4 365.9h5v5h-5zM499.4 365.5h5v5h-5zM506.4 365h5v5h-5zM513.4 364.6h5v5h-5zM520.4 364.2h5v5h-5zM527.4 363.8h5v5h-5zM534.4 363.3h5v5h-5zM541.4 362.9h5v5h-5zM548.3 362.5h5v5h-5zM555.3 362h5v5h-5zM562.3 361.3h5v5h-5zM569.3 360.5h5v5h-5zM576.2 359.7h5v5h-5zM583.2 358.9h5v5h-5zM590.1 358.1h5v5h-5zM597.1 357.3h5v5h-5zM604.1 356.4h5v5h-5zM611 355.6h5v5h-5zM618 354.8h5v5h-5zM625 354h5v5h-5zM631.9 353.2h5v5h-5zM638.9 352.4h5v5h-5zM645.8 351.6h5v5h-5zM652.8 350.7h5v5h-5zM659.8 349.9h5v5h-5zM666.7 349.1h5v5h-5zM673.7 348.3h5v5h-5zM680.6 347.5h5v5h-5zM687.6 346.7h5v5h-5zM694.6 345.8h5v5h-5zM701.5 344.9h5v5h-5zM708.4 343.8h5v5h-5zM715.3 342.7h5v5h-5zM722.3 341.7h5v5h-5zM729.2 340.6h5v5h-5zM736.1 339.5h5v5h-5zM743 338.4h5v5h-5zM750 337.4h5v5h-5zM756.9 336.3h5v5h-5zM763.8 335.2h5v5h-5zM770.7 334.1h5v5h-5zM777.7 333.1h5v5h-5zM784.6 332h5v5h-5zM791.5 330.9h5v5h-5zM798.4 329.9h5v5h-5zM805.4 328.9h5v5h-5zM812.3 327.9h5v5h-5zM819.3 326.9h5v5h-5zM826.2 325.9h5v5h-5zM833.1 324.9h5v5h-5zM840.1 323.9h5v5h-5zM847 322.9h5v5h-5zM853.9 321.9h5v5h-5zM860.9 320.9h5v5h-5zM867.8 320h5v5h-5zM874.8 319h5v5h-5zM881.7 318h5v5h-5zM888.6 317h5v5h-5zM895.6 316h5v5h-5zM902.5 315h5v5h-5z" fill="#e8a0ec"/>
<path d="M372.5 445.5h5v5h-5zM379.3 444.7h5v5h-5zM386.2 443.9h5v5h-5zM393 443.1h5v5h-5zM399.8 442.4h5v5h-5zM406.7 441.6h5v5h-5zM413.5 440.8h5v5h-5zM420.3 440h5v5h-5zM427.2 439.2h5v5h-5zM434 438.4h5v5h-5zM440.8 437.6h5v5h-5zM447.7 436.8h5v5h-5zM454.5 436.1h5v5h-5zM461.3 435.3h5v5h-5zM468.2 434.5h5v5h-5zM475 433.7h5v5h-5zM481.8 432.9h5v5h-5zM488.7 432.1h5v5h-5zM495.5 431.3h5v5h-5zM502.3 430.6h5v5h-5zM509.2 429.8h5v5h-5zM516 429h5v5h-5zM522.8 428.2h5v5h-5zM529.7 427.4h5v5h-5zM536.5 426.6h5v5h-5zM543.3 425.8h5v5h-5zM550.2 425h5v5h-5zM557 424.3h5v5h-5zM563.9 423.6h5v5h-5zM570.7 423h5v5h-5zM577.6 422.4h5v5h-5zM584.4 421.8h5v5h-5zM591.3 421.1h5v5h-5zM598.1 420.5h5v5h-5zM605 419.9h5v5h-5zM611.8 419.3h5v5h-5zM618.7 418.7h5v5h-5zM625.5 418h5v5h-5zM632.4 417.4h5v5h-5zM639.2 416.8h5v5h-5zM646.1 416.2h5v5h-5zM652.9 415.5h5v5h-5zM659.8 414.9h5v5h-5zM666.6 414.3h5v5h-5zM673.5 413.7h5v5h-5zM680.3 413.1h5v5h-5zM687.2 412.4h5v5h-5zM694 411.8h5v5h-5zM700.9 411h5v5h-5zM707.7 410.1h5v5h-5zM714.5 409.1h5v5h-5zM721.3 408.2h5v5h-5zM728.1 407.2h5v5h-5zM734.9 406.3h5v5h-5zM741.7 405.3h5v5h-5zM748.6 404.4h5v5h-5zM755.4 403.4h5v5h-5zM762.2 402.4h5v5h-5zM769 401.5h5v5h-5zM775.8 400.5h5v5h-5zM782.6 399.6h5v5h-5zM789.4 398.6h5v5h-5zM796.2 397.7h5v5h-5zM803.1 396.9h5v5h-5zM809.9 396.2h5v5h-5zM816.8 395.4h5v5h-5zM823.6 394.7h5v5h-5zM830.4 393.9h5v5h-5zM837.3 393.2h5v5h-5zM844.1 392.4h5v5h-5zM851 391.7h5v5h-5zM857.8 390.9h5v5h-5zM864.6 390.2h5v5h-5zM871.5 389.5h5v5h-5zM878.3 388.7h5v5h-5zM885.1 388h5v5h-5zM892 387.2h5v5h-5zM898.8 386.5h5v5h-5zM905.7 385.7h5v5h-5zM912.5 385h5v5h-5z" fill="#e8a0ec"/>
<path d="M359 391.2L366 390.9L373.2 391.3L380.4 391.6L387.6 391.9L394.8 392.2L402 392.5L409.1 392.8L416.3 393.1L423.5 393.4L430.7 393.6L437.8 393.9L445 394.1L452.1 394.4L459.3 394.6L466.4 394.8L473.6 395L480.7 395.3L487.8 395.4L495 395.6L502.1 395.8L509.2 396L516.3 396.2L523.5 396.3L530.6 396.5L537.7 396.6L544.8 396.7L551.9 396.8L559 397L566.1 397.2L573 396.8L580 396.1L586.9 395.4L593.8 394.7L600.7 394L607.6 393.2L614.5 392.5L621.4 391.8L628.3 391.1L635.2 390.4L642.1 389.7L649 389L655.9 388.3" stroke="#d8b0d8" stroke-width="1" fill="none"/>
<path d="M357 389.2h4v4h-4zM385.6 389.9h4v4h-4zM414.3 391.1h4v4h-4zM443 392.1h4v4h-4zM471.6 393h4v4h-4zM500.1 393.8h4v4h-4zM528.6 394.5h4v4h-4zM557 395h4v4h-4zM584.9 393.4h4v4h-4zM612.5 390.5h4v4h-4zM640.1 387.7h4v4h-4z" fill="#e8a0ec"/>
<path d="M561 364H645M561 371H645M561 378H645M561 385H645M561 392H645M561 399H645M561 406H645M561 413H645M561 420H645M561 427H645" stroke="#b898b8" stroke-width="1" opacity=".8"/>
<path d="M558.8 361.8h4.5v4.5h-4.5zM558.8 368.8h4.5v4.5h-4.5zM558.8 375.8h4.5v4.5h-4.5zM558.8 382.8h4.5v4.5h-4.5zM558.8 389.8h4.5v4.5h-4.5zM558.8 396.8h4.5v4.5h-4.5zM558.8 403.8h4.5v4.5h-4.5zM558.8 410.8h4.5v4.5h-4.5zM558.8 417.8h4.5v4.5h-4.5zM558.8 424.8h4.5v4.5h-4.5zM642.8 361.8h4.5v4.5h-4.5zM642.8 368.8h4.5v4.5h-4.5zM642.8 375.8h4.5v4.5h-4.5zM642.8 382.8h4.5v4.5h-4.5zM642.8 389.8h4.5v4.5h-4.5zM642.8 396.8h4.5v4.5h-4.5zM642.8 403.8h4.5v4.5h-4.5zM642.8 410.8h4.5v4.5h-4.5zM642.8 417.8h4.5v4.5h-4.5zM642.8 424.8h4.5v4.5h-4.5z" fill="#e8a0ec"/>
<path d="M561 427L561 515L561.3 521.6L562.3 528L564 534.4L566.3 540.6L569.3 546.6L572.8 552.4L577 557.8L581.6 562.8L586.8 567.5L592.4 571.7L598.4 575.4L604.8 578.6L611.5 581.2L618.4 583.3L625.5 584.8L632.7 585.7L640 586L935 585L942 584.5L966.6 580.5L987 572.3L1011.3 554L1027.5 525.6L1039.7 501L1047.8 474.8L956.4 432.2L950.3 468.8L942.2 497.2L926 513.4L912 519.5L900 520L680 520L676.3 519.8L672.7 519.2L669.2 518.3L665.8 517L662.5 515.3L659.4 513.3L656.6 511L654 508.4L651.7 505.6L649.7 502.5L648 499.2L646.7 495.8L645.8 492.3L645.2 488.7L645 485L645 427Z" fill="#000" stroke="#e8a0ec" stroke-width="1.8" stroke-linejoin="round"/>
<path d="M561 427L645 427M561 434.2L645 434.2M561 441.5L645 441.5M561 448.8L645 448.8M561 456L645 456M561 463.2L645 463.2M561 470.5L645 470.5M561 477.8L645 477.8M561 485L645 485M561 492L645.1 487M561 498.9L645.3 489.1M561 505.9L645.6 491.1M561 512.8L646 493.1M561.2 519.8L646.5 495M562.1 526.7L647.2 497M563.8 533.4L647.9 498.9M566.1 540L648.8 500.7M569.1 546.3L649.7 502.5M572.7 552.2L650.8 504.2M576.9 557.7L651.9 505.9M581.6 562.8L653.2 507.5M586.8 567.5L654.6 509M592.4 571.7L656 510.4M598.3 575.3L657.5 511.8M604.5 578.4L659.1 513.1M611 581L660.8 514.2M617.6 583.1L662.5 515.3M624.4 584.6L664.3 516.2M631.3 585.5L666.1 517.1M638.3 585.9L668 517.8M645.2 586L670 518.5M652.2 586L671.9 519M659.1 586L673.9 519.4M666.1 586L675.9 519.7M673 586L678 519.9M680 586L680 520M687.1 585L687.1 520M694.2 585L694.2 520M701.3 585L701.3 520M708.4 585L708.4 520M715.5 585L715.5 520M722.6 585L722.6 520M729.7 585L729.7 520M736.8 585L736.8 520M743.9 585L743.9 520M751 585L751 520M758.1 585L758.1 520M765.2 585L765.2 520M772.3 585L772.3 520M779.4 585L779.4 520M786.5 585L786.5 520M793.5 585L793.5 520M800.6 585L800.6 520M807.7 585L807.7 520M814.8 585L814.8 520M821.9 585L821.9 520M829 585L829 520M836.1 585L836.1 520M843.2 585L843.2 520M850.3 585L850.3 520M857.4 585L857.4 520M864.5 585L864.5 520M871.6 585L871.6 520M878.7 585L878.7 520M885.8 585L885.8 520M892.9 585L892.9 520M900 585L900 520M907.7 585L904.3 519.8M915.3 585L908.6 519.6M923 585L912.9 519.1M930.7 585L916.9 517.4M938.3 584.8L920.8 515.7M945.9 583.9L924.8 513.9M953.5 582.6L928.1 511.3M961 581.4L931.2 508.2M968.5 579.7L934.2 505.2M975.6 576.9L937.3 502.1M982.7 574L940.4 499M989.4 570.5L942.7 495.5M995.6 565.9L943.9 491.4M1001.7 561.3L945 487.2M1007.8 556.6L946.2 483.1M1012.9 551.2L947.4 478.9M1016.7 544.5L948.6 474.7M1020.5 537.8L949.8 470.6M1024.3 531.2L950.7 466.3M1028 524.5L951.4 462.1M1031.5 517.6L952.1 457.8M1034.9 510.8L952.8 453.5M1038.3 503.9L953.6 449.3M1041 496.8L954.3 445M1043.3 489.4L955 440.7M1045.5 482.1L955.7 436.5M1047.8 474.8L956.4 432.2" stroke="#c8a0c8" stroke-width="1.4" fill="none"/>
<path d="M645 427L561 434.2M645 434.2L561 441.5M645 441.5L561 448.8M645 448.8L561 456M645 456L561 463.2M645 463.2L561 470.5M645 470.5L561 477.8M645 477.8L561 485M645 485L561 492M645.1 487L561 498.9M645.3 489.1L561 505.9M645.6 491.1L561 512.8M646 493.1L561.2 519.8M646.5 495L562.1 526.7M647.2 497L563.8 533.4M647.9 498.9L566.1 540M648.8 500.7L569.1 546.3M649.7 502.5L572.7 552.2M650.8 504.2L576.9 557.7M651.9 505.9L581.6 562.8M653.2 507.5L586.8 567.5M654.6 509L592.4 571.7M656 510.4L598.3 575.3M657.5 511.8L604.5 578.4M659.1 513.1L611 581M660.8 514.2L617.6 583.1M662.5 515.3L624.4 584.6M664.3 516.2L631.3 585.5M666.1 517.1L638.3 585.9M668 517.8L645.2 586M670 518.5L652.2 586M671.9 519L659.1 586M673.9 519.4L666.1 586M675.9 519.7L673 586M678 519.9L680 586M680 520L687.1 585M687.1 520L694.2 585M694.2 520L701.3 585M701.3 520L708.4 585M708.4 520L715.5 585M715.5 520L722.6 585M722.6 520L729.7 585M729.7 520L736.8 585M736.8 520L743.9 585M743.9 520L751 585M751 520L758.1 585M758.1 520L765.2 585M765.2 520L772.3 585M772.3 520L779.4 585M779.4 520L786.5 585M786.5 520L793.5 585M793.5 520L800.6 585M800.6 520L807.7 585M807.7 520L814.8 585M814.8 520L821.9 585M821.9 520L829 585M829 520L836.1 585M836.1 520L843.2 585M843.2 520L850.3 585M850.3 520L857.4 585M857.4 520L864.5 585M864.5 520L871.6 585M871.6 520L878.7 585M878.7 520L885.8 585M885.8 520L892.9 585M892.9 520L900 585M900 520L907.7 585M904.3 519.8L915.3 585M908.6 519.6L923 585M912.9 519.1L930.7 585M916.9 517.4L938.3 584.8M920.8 515.7L945.9 583.9M924.8 513.9L953.5 582.6M928.1 511.3L961 581.4M931.2 508.2L968.5 579.7M934.2 505.2L975.6 576.9M937.3 502.1L982.7 574M940.4 499L989.4 570.5M942.7 495.5L995.6 565.9M943.9 491.4L1001.7 561.3M945 487.2L1007.8 556.6M946.2 483.1L1012.9 551.2M947.4 478.9L1016.7 544.5M948.6 474.7L1020.5 537.8M949.8 470.6L1024.3 531.2M950.7 466.3L1028 524.5M951.4 462.1L1031.5 517.6M952.1 457.8L1034.9 510.8M952.8 453.5L1038.3 503.9M953.6 449.3L1041 496.8M954.3 445L1043.3 489.4M955 440.7L1045.5 482.1M955.7 436.5L1047.8 474.8" stroke="#f4e4f4" stroke-width="0.9" fill="none"/>
<path d="M558.5 424.5h5v5h-5zM558.5 431.8h5v5h-5zM558.5 439h5v5h-5zM558.5 446.2h5v5h-5zM558.5 453.5h5v5h-5zM558.5 460.8h5v5h-5zM558.5 468h5v5h-5zM558.5 475.2h5v5h-5zM558.5 482.5h5v5h-5zM558.5 489.5h5v5h-5zM558.5 496.4h5v5h-5zM558.5 503.4h5v5h-5zM558.5 510.3h5v5h-5zM558.7 517.3h5v5h-5zM559.6 524.2h5v5h-5zM561.3 530.9h5v5h-5zM563.6 537.5h5v5h-5zM566.6 543.8h5v5h-5zM570.2 549.7h5v5h-5zM574.4 555.2h5v5h-5zM579.1 560.3h5v5h-5zM584.3 565h5v5h-5zM589.9 569.2h5v5h-5zM595.8 572.8h5v5h-5zM602 575.9h5v5h-5zM608.5 578.5h5v5h-5zM615.1 580.6h5v5h-5zM621.9 582.1h5v5h-5zM628.8 583h5v5h-5zM635.8 583.4h5v5h-5zM642.7 583.5h5v5h-5zM649.7 583.5h5v5h-5zM656.6 583.5h5v5h-5zM663.6 583.5h5v5h-5zM670.5 583.5h5v5h-5zM677.5 583.5h5v5h-5zM684.6 582.5h5v5h-5zM691.7 582.5h5v5h-5zM698.8 582.5h5v5h-5zM705.9 582.5h5v5h-5zM713 582.5h5v5h-5zM720.1 582.5h5v5h-5zM727.2 582.5h5v5h-5zM734.3 582.5h5v5h-5zM741.4 582.5h5v5h-5zM748.5 582.5h5v5h-5zM755.6 582.5h5v5h-5zM762.7 582.5h5v5h-5zM769.8 582.5h5v5h-5zM776.9 582.5h5v5h-5zM784 582.5h5v5h-5zM791 582.5h5v5h-5zM798.1 582.5h5v5h-5zM805.2 582.5h5v5h-5zM812.3 582.5h5v5h-5zM819.4 582.5h5v5h-5zM826.5 582.5h5v5h-5zM833.6 582.5h5v5h-5zM840.7 582.5h5v5h-5zM847.8 582.5h5v5h-5zM854.9 582.5h5v5h-5zM862 582.5h5v5h-5zM869.1 582.5h5v5h-5zM876.2 582.5h5v5h-5zM883.3 582.5h5v5h-5zM890.4 582.5h5v5h-5zM897.5 582.5h5v5h-5zM905.2 582.5h5v5h-5zM912.8 582.5h5v5h-5zM920.5 582.5h5v5h-5zM928.2 582.5h5v5h-5zM935.8 582.3h5v5h-5zM943.4 581.4h5v5h-5zM951 580.1h5v5h-5zM958.5 578.9h5v5h-5zM966 577.2h5v5h-5zM973.1 574.4h5v5h-5zM980.2 571.5h5v5h-5zM986.9 568h5v5h-5zM993.1 563.4h5v5h-5zM999.2 558.8h5v5h-5zM1005.3 554.1h5v5h-5zM1010.4 548.7h5v5h-5zM1014.2 542h5v5h-5zM1018 535.3h5v5h-5zM1021.8 528.7h5v5h-5zM1025.5 522h5v5h-5zM1029 515.1h5v5h-5zM1032.4 508.3h5v5h-5zM1035.8 501.4h5v5h-5zM1038.5 494.3h5v5h-5zM1040.8 486.9h5v5h-5zM1043 479.6h5v5h-5zM1045.3 472.3h5v5h-5z" fill="#e8a0ec"/>
<path d="M642.5 424.5h5v5h-5zM642.5 431.8h5v5h-5zM642.5 439h5v5h-5zM642.5 446.2h5v5h-5zM642.5 453.5h5v5h-5zM642.5 460.8h5v5h-5zM642.5 468h5v5h-5zM642.5 475.2h5v5h-5zM642.5 482.5h5v5h-5zM642.6 484.5h5v5h-5zM642.8 486.6h5v5h-5zM643.1 488.6h5v5h-5zM643.5 490.6h5v5h-5zM644 492.5h5v5h-5zM644.7 494.5h5v5h-5zM645.4 496.4h5v5h-5zM646.3 498.2h5v5h-5zM647.2 500h5v5h-5zM648.3 501.7h5v5h-5zM649.4 503.4h5v5h-5zM650.7 505h5v5h-5zM652.1 506.5h5v5h-5zM653.5 507.9h5v5h-5zM655 509.3h5v5h-5zM656.6 510.6h5v5h-5zM658.3 511.7h5v5h-5zM660 512.8h5v5h-5zM661.8 513.7h5v5h-5zM663.6 514.6h5v5h-5zM665.5 515.3h5v5h-5zM667.5 516h5v5h-5zM669.4 516.5h5v5h-5zM671.4 516.9h5v5h-5zM673.4 517.2h5v5h-5zM675.5 517.4h5v5h-5zM677.5 517.5h5v5h-5zM684.6 517.5h5v5h-5zM691.7 517.5h5v5h-5zM698.8 517.5h5v5h-5zM705.9 517.5h5v5h-5zM713 517.5h5v5h-5zM720.1 517.5h5v5h-5zM727.2 517.5h5v5h-5zM734.3 517.5h5v5h-5zM741.4 517.5h5v5h-5zM748.5 517.5h5v5h-5zM755.6 517.5h5v5h-5zM762.7 517.5h5v5h-5zM769.8 517.5h5v5h-5zM776.9 517.5h5v5h-5zM784 517.5h5v5h-5zM791 517.5h5v5h-5zM798.1 517.5h5v5h-5zM805.2 517.5h5v5h-5zM812.3 517.5h5v5h-5zM819.4 517.5h5v5h-5zM826.5 517.5h5v5h-5zM833.6 517.5h5v5h-5zM840.7 517.5h5v5h-5zM847.8 517.5h5v5h-5zM854.9 517.5h5v5h-5zM862 517.5h5v5h-5zM869.1 517.5h5v5h-5zM876.2 517.5h5v5h-5zM883.3 517.5h5v5h-5zM890.4 517.5h5v5h-5zM897.5 517.5h5v5h-5zM901.8 517.3h5v5h-5zM906.1 517.1h5v5h-5zM910.4 516.6h5v5h-5zM914.4 514.9h5v5h-5zM918.3 513.2h5v5h-5zM922.3 511.4h5v5h-5zM925.6 508.8h5v5h-5zM928.7 505.7h5v5h-5zM931.7 502.7h5v5h-5zM934.8 499.6h5v5h-5zM937.9 496.5h5v5h-5zM940.2 493h5v5h-5zM941.4 488.9h5v5h-5zM942.5 484.7h5v5h-5zM943.7 480.6h5v5h-5zM944.9 476.4h5v5h-5zM946.1 472.2h5v5h-5zM947.3 468.1h5v5h-5zM948.2 463.8h5v5h-5zM948.9 459.6h5v5h-5zM949.6 455.3h5v5h-5zM950.3 451h5v5h-5zM951.1 446.8h5v5h-5zM951.8 442.5h5v5h-5zM952.5 438.2h5v5h-5zM953.2 434h5v5h-5zM953.9 429.7h5v5h-5z" fill="#e8a0ec"/>
<path d="M607.2 427L607.2 434.2L607.2 441.5L607.2 448.8L607.2 456L607.2 463.2L607.2 470.5L607.2 477.8L607.2 485L607.3 489.2L607.3 493.5L607.5 497.7L607.7 502L608.1 506.2L608.9 510.3L610 514.4L611.6 518.4L613.4 522.2L615.7 525.8L618.2 529.2L621 532.4L624.1 535.3L627.4 538L630.9 540.4L634.6 542.5L638.4 544.3L642.3 545.8L646.4 547L650.5 547.9L654.6 548.5L658.8 548.9L663 549.2L667.3 549.4L671.5 549.6L675.8 549.6L680 549.7L687.1 549.2L694.2 549.2L701.3 549.2L708.4 549.2L715.5 549.2L722.6 549.2L729.7 549.2L736.8 549.2L743.9 549.2L751 549.2L758.1 549.2L765.2 549.2L772.3 549.2L779.4 549.2L786.5 549.2L793.5 549.2L800.6 549.2L807.7 549.2L814.8 549.2L821.9 549.2L829 549.2L836.1 549.2L843.2 549.2L850.3 549.2L857.4 549.2L864.5 549.2L871.6 549.2L878.7 549.2L885.8 549.2L892.9 549.2L900 549.2L905.8 549.2L911.7 549.1L917.4 548.8L923.1 547.8L928.7 546.8L934.3 545.4L939.5 543.4L944.6 541.1L949.7 538.7L954.5 535.7L959.4 532.8L963.7 529.3L967.1 524.9L970.5 520.5L973.9 516.2L976.9 511.4L979.3 506.1L981.6 500.8L983.8 495.5L985.9 490.2L987.8 484.7L989.8 479.3L991.7 473.9L993.3 468.3L994.7 462.7L996.1 457L997.5 451.4" stroke="#e0b8e0" stroke-width="1" fill="none"/>
<path d="M605.2 425h4v4h-4zM605.2 468.5h4v4h-4zM605.7 500h4v4h-4zM613.7 523.8h4v4h-4zM632.6 540.5h4v4h-4zM656.8 546.9h4v4h-4zM685.1 547.2h4v4h-4zM727.7 547.2h4v4h-4zM770.3 547.2h4v4h-4zM812.8 547.2h4v4h-4zM855.4 547.2h4v4h-4zM898 547.2h4v4h-4zM932.3 543.4h4v4h-4zM961.7 527.3h4v4h-4zM979.6 498.8h4v4h-4zM991.3 466.3h4v4h-4z" fill="#e8a0ec"/>
<path d="M311.5 180V592M469 180V592M626.5 180V592M783.5 180V592M940.5 180V592M175 330.5H1084M175 487H1084" stroke="#b0b0b0" stroke-width="1" fill="none" opacity=".45"/>
<path d="M990 342.3L1068 355.6" stroke="#fff" stroke-width="1.2" stroke-dasharray="3 2"/>
</svg>
<div id="corner" class="a"></div>
<div id="vscroll" class="a"></div>
<div class="a" style="left:1086px;top:183px;width:14px;height:14px;border:1px solid #c8c8c8;background:linear-gradient(#fafafa,#e0e0e0)"></div>
<div class="a" style="left:1090px;top:188px;width:0;height:0;border-left:3px solid transparent;border-right:3px solid transparent;border-bottom:4px solid #555"></div>
<div class="a" style="left:1086px;top:377px;width:14px;height:15px;border:1px solid #7aa0c8;background:linear-gradient(#e0f0ff,#a8cff0)"></div>
<div class="a" style="left:1086px;top:577px;width:14px;height:14px;border:1px solid #c8c8c8;background:linear-gradient(#fafafa,#e0e0e0)"></div>
<div class="a" style="left:1090px;top:583px;width:0;height:0;border-left:3px solid transparent;border-right:3px solid transparent;border-top:4px solid #555"></div>
<div id="hsl" class="a"></div>
<div id="hscroll" class="a"></div>
<div class="a" style="left:178px;top:597px;width:0;height:0;border-top:3px solid transparent;border-bottom:3px solid transparent;border-right:4px solid #444"></div>
<div class="a" style="left:1075px;top:597px;width:0;height:0;border-top:3px solid transparent;border-bottom:3px solid transparent;border-left:4px solid #222"></div>
<div class="a" style="left:611px;top:593px;width:39px;height:15px;border:1px solid #b8b8b8;border-radius:2px;background:linear-gradient(#fdfdfd,#e4e4e4)"></div>
<div class="a" style="left:626px;top:598px;width:1px;height:5px;background:#777;box-shadow:2px 0 #777,4px 0 #777"></div>
<div id="band" class="a"></div>
<div id="player" class="a"></div>
<div class="btn" style="left:166px;top:625px;width:21px;height:21px"></div>
<svg class="a" style="left:166px;top:625px" width="21" height="21"><rect x="5" y="6" width="2" height="9" fill="#777"/><path d="M16 6 L8 10.5 L16 15Z" fill="#888"/></svg>
<div class="a" style="left:196px;top:624px;width:9px;height:20px;border:1px solid #c8c8cc;border-radius:2px;background:linear-gradient(#fff,#ececec)"></div>
<div class="a" style="left:204px;top:627px;width:574px;height:15px;background:#f9a0f4;border-top:1px solid #a27a9e;border-bottom:2px solid #fff"></div>
<div class="btn" style="left:790px;top:626px;width:22px;height:20px"></div>
<svg class="a" style="left:790px;top:626px" width="22" height="20"><path d="M6 5 L13 10 L6 15Z" fill="#888"/><rect x="14" y="5" width="2" height="10" fill="#777"/></svg>
<div class="btn" style="left:824px;top:625px;width:38px;height:20px"></div>
<svg class="a" style="left:824px;top:625px" width="38" height="20"><path d="M15 4.5 L25.5 10.5 L15 16.5Z" fill="#9a9a9a"/></svg>
<div class="btn" style="left:871px;top:625px;width:37px;height:20px"></div>
<div class="a" style="left:884px;top:631px;width:10px;height:10px;background:#9a9a9a"></div>
<div class="a" style="left:927px;top:633px;width:74px;height:3px;background:#f4f4f8;border:1px solid #c8c8d0;border-radius:1px"></div>
<div class="a" style="left:957px;top:627px;width:10px;height:15px;border:1px solid #b8b8c0;border-radius:2px 2px 4px 4px;background:linear-gradient(#fff,#e6e6ea)"></div>
<div class="a" style="left:1018px;top:630px;width:12px;height:12px;border:1px solid #c0c0c8;background:#f6f6f6"></div>
<div class="t" style="left:1033px;top:631px;color:#7a7a80;font-size:10.6px">Прокрутка</div>
<div class="a" style="left:166px;top:653px;width:926px;height:1px;background:#c4c4cc;border-bottom:1px solid #f0f0f4"></div>
<div class="a" style="left:160px;top:651px;width:5px;height:5px;border:1px solid #999;background:#eee"></div>
<div class="btn" style="left:166px;top:665px;width:38px;height:20px"></div>
<div class="btn" style="left:207px;top:665px;width:38px;height:20px"></div>
<div class="btn" style="left:247px;top:665px;width:38px;height:20px"></div>
<div class="a" style="left:288px;top:665px;width:41px;height:20px;border:1px solid #c8c8cc;border-radius:2px;background:#f8f8f8"></div>
<div class="btn" style="left:369px;top:665px;width:38px;height:20px"></div>
<div class="btn" style="left:410px;top:665px;width:38px;height:20px"></div>
<div class="btn" style="left:451px;top:665px;width:38px;height:20px"></div>
<div class="btn" style="left:499px;top:665px;width:39px;height:20px"></div>
<div class="a" style="left:541px;top:665px;width:24px;height:20px;border:1px solid #c8c8cc;border-radius:2px;background:#f8f8f8"></div>
<div class="btn" style="left:589px;top:665px;width:39px;height:20px"></div>
<svg class="a" style="left:160px;top:660px" width="480" height="30">
 <g fill="none" stroke="#8a8a8e" stroke-width="1.1">
  <path d="M14.5 9 L16 20 L17.5 9 M16 15 V21"/><path d="M13 20 V22"/>
  <path d="M54.5 9 L56 20 L57.5 9 M56 15 V21"/><path d="M53 20 V22"/>
  <path d="M94 9 L95.5 20 L97 9 M95.5 15 V21"/><path d="M92.5 20 V22"/>
  <path d="M216 9 L217.5 20 L219 9 M217.5 15 V21"/><path d="M214.5 20 V22"/>
  <path d="M256 9 L257.5 20 L259 9 M257.5 15 V21"/><path d="M254.5 20 V22"/>
  <path d="M298 9 L299.5 20 L301 9 M299.5 15 V21"/><path d="M296.5 20 V22"/>
 </g>
 <g fill="none" stroke="#8a8a8a" stroke-width="1.3">
  <path d="M345.5 10 H359.5 M345.5 22 H359.5 M348 10 V22 M357 10 V22"/>
  <path d="M436 10 H449 M436 22 H449 M438.5 10 V22 M446.5 10 V22"/>
 </g>
</svg>
<div class="t" style="left:180px;top:670px;color:#8a8a8e;font-size:11px;letter-spacing:-.6px">-100</div>
<div class="t" style="left:224px;top:670px;color:#8a8a8e;font-size:11px;letter-spacing:-.6px">-10</div>
<div class="t" style="left:267px;top:670px;color:#8a8a8e;font-size:11px;letter-spacing:-.8px">-1</div>
<div class="t" style="left:320px;top:670px;color:#8a8a8e;font-size:11px">0</div>
<div class="t" style="left:328px;top:670px;color:#5a5a5e;font-size:11px;letter-spacing:-.6px">/662</div>
<div class="t" style="left:389px;top:670px;color:#8a8a8e;font-size:11px;letter-spacing:-.6px">+1</div>
<div class="t" style="left:426px;top:670px;color:#8a8a8e;font-size:11px;letter-spacing:-.6px">+10</div>
<div class="t" style="left:464px;top:670px;color:#8a8a8e;font-size:11px;letter-spacing:-.6px">+100</div>
<div class="t" style="left:527px;top:670px;color:#8a8a8e;font-size:11px">-</div>
<div class="t" style="left:557px;top:670px;color:#8a8a8e;font-size:11px">0</div>
<div class="t" style="left:566px;top:670px;color:#5a5a5e;font-size:11px;letter-spacing:-.6px">/1</div>
<div class="t" style="left:615px;top:670px;color:#8a8a8e;font-size:11px">+</div>
<div id="status" class="a"></div>
<div class="t" style="left:160px;top:695px;color:#ececec;font-size:10.7px;-webkit-text-stroke:.3px #ececec">Всего: Ширина = 31.70 мм, высота = 38.50 мм, стежки = 280</div>
<div id="statusR" class="a"></div>
<div class="a" style="left:865px;top:692px;width:20px;height:17px;background:#e6e6e6;border:1px solid #bbb"></div>
<svg class="a" style="left:865px;top:692px" width="20" height="17"><circle cx="10" cy="8.5" r="6" fill="#48c040"/><path d="M5 8.5 L9 5 V12Z M15 8.5 L11 5 V12Z" fill="#1a7a1a"/></svg>
<div class="a" style="left:888px;top:692px;width:20px;height:17px;background:#d8d8d8;border:1px solid #bbb"></div>
<svg class="a" style="left:888px;top:692px" width="20" height="17"><path d="M5 3 H12 L15 6 V14 H5Z" fill="#eee" stroke="#777" stroke-width=".8"/><path d="M7 9 H13 M7 11 H13" stroke="#777" stroke-width=".8"/></svg>
<div class="t" style="left:917px;top:695px;color:#f2f2f2;font-size:10.6px">478%</div>
<svg class="a" style="left:955px;top:690px" width="145" height="22">
 <circle cx="12" cy="10.5" r="7" fill="#d8d8d8" stroke="#666" stroke-width="1"/><rect x="8" y="9.5" width="8" height="2" fill="#555"/>
 <path d="M24 10.5 H104" stroke="#e8e8e8" stroke-width="1"/><path d="M63 8 V13" stroke="#eee"/>
 <path d="M83 4 H93 V12 L88 16 L83 12Z" fill="#f0f0f0" stroke="#666" stroke-width=".8"/>
 <circle cx="121" cy="10.5" r="7" fill="#d8d8d8" stroke="#666" stroke-width="1"/><rect x="117" y="9.5" width="8" height="2" fill="#555"/><rect x="120" y="6.5" width="2" height="8" fill="#555"/>
 <g fill="#444"><rect x="137" y="17" width="2" height="2"/><rect x="140" y="17" width="2" height="2"/><rect x="140" y="14" width="2" height="2"/></g>
</svg>
<div class="a" style="left:160px;top:711px;width:943px;height:2px;background:#8a8a8a"></div><div class="a" style="left:160px;top:713px;width:943px;height:3px;background:#0a0a0a"></div><div class="a" style="left:160px;top:716px;width:948px;height:1px;background:#d8d8d8"></div>
<svg class="a" style="left:1055px;top:340px" width="45" height="45" viewBox="1055 340 45 45"><path d="M1071.5 347V363.5M1063 355.5H1080" stroke="#111" stroke-width="3.2"/><path d="M1071.5 348V363M1063.8 355.5H1079.3" stroke="#fff" stroke-width="1.4"/><path d="M1075 369 L1078 361.5 L1084 358 L1092 358 L1091.5 368 L1084 368.5 L1084.5 375.5 L1076 376 Z" fill="#fafafa" stroke="#111" stroke-width="1.1" stroke-linejoin="round"/><path d="M1084 358.5 L1084 368.5 L1075.5 368.5" stroke="#888" stroke-width=".8" fill="none"/></svg>
</body></html>
